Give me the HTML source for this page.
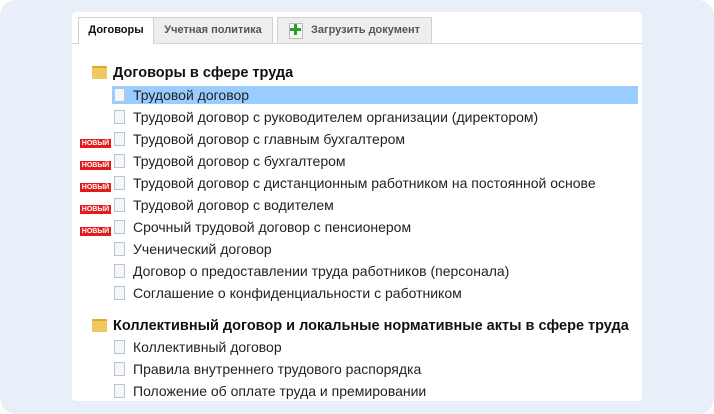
<!DOCTYPE html>
<html><head><meta charset="utf-8"><style>
body{margin:0;width:714px;height:414px;background:#fff;font-family:"Liberation Sans","DejaVu Sans",sans-serif;overflow:hidden}
.frame{position:absolute;left:0;top:0;width:714px;height:414px;background:#e9eff8;border-radius:16px}
.panel{position:absolute;left:72px;top:12px;width:570px;height:389px;background:#fff;border-radius:4px}
.tabline{position:absolute;left:72px;top:43px;width:570px;height:1px;background:#d8d8d8}
.tab{position:absolute;top:17px;height:26px;box-sizing:border-box;border:1px solid #d0d0d0;border-bottom:none;font-size:11px;font-weight:bold;line-height:25px;text-align:center;color:#555;background:#eee}
.row{position:absolute;left:133px;font-size:14px;color:#222;white-space:nowrap;height:18px;line-height:18px}
.h{position:absolute;left:113px;font-size:14.5px;font-weight:bold;color:#111;white-space:nowrap;line-height:18px}
.doc{position:absolute;left:114px;width:9px;height:12px;background:#f4f6fa;border:1px solid #b8c4d4}
.fold{position:absolute;left:92px;width:15px;height:11px;background:#f0c860;border-radius:1px;border-top:2px solid #e0a830}
.new{position:absolute;left:80px;width:31px;height:9px;background:#e21b1b;color:#fff;font-size:7px;font-weight:bold;line-height:9px;text-align:center}
.hl{position:absolute;left:112px;top:86px;width:526px;height:18px;background:#99ccff}
</style></head><body>
<div class="frame"></div>
<div class="panel"></div>
<div class="tabline"></div>
<div class="tab" style="left:78px;width:76px;background:#fff;color:#111;height:27px">Договоры</div>
<div class="tab" style="left:153px;width:120px">Учетная политика</div>
<div class="tab" style="left:277px;width:155px;text-align:left;padding-left:33px">Загрузить документ
<div style="position:absolute;left:11px;top:5px;width:12px;height:14px;background:#f4f6f8;border:1px solid #bbb"></div>
<div style="position:absolute;left:12px;top:10px;width:11px;height:3px;background:#2aa02a"></div>
<div style="position:absolute;left:16px;top:6px;width:3px;height:11px;background:#2aa02a"></div></div>
<div class="hl"></div>
<div class="fold" style="top:66px"></div><div class="h" style="top:64px">Договоры в сфере труда</div>
<div class="doc" style="top:88px"></div><div class="row" style="top:86px">Трудовой договор</div>
<div class="doc" style="top:110px"></div><div class="row" style="top:108px">Трудовой договор с руководителем организации (директором)</div>
<div class="doc" style="top:132px"></div><div class="row" style="top:130px">Трудовой договор с главным бухгалтером</div><div class="new" style="top:139px">НОВЫЙ</div>
<div class="doc" style="top:154px"></div><div class="row" style="top:152px">Трудовой договор с бухгалтером</div><div class="new" style="top:161px">НОВЫЙ</div>
<div class="doc" style="top:176px"></div><div class="row" style="top:174px">Трудовой договор с дистанционным работником на постоянной основе</div><div class="new" style="top:183px">НОВЫЙ</div>
<div class="doc" style="top:198px"></div><div class="row" style="top:196px">Трудовой договор с водителем</div><div class="new" style="top:205px">НОВЫЙ</div>
<div class="doc" style="top:220px"></div><div class="row" style="top:218px">Срочный трудовой договор с пенсионером</div><div class="new" style="top:227px">НОВЫЙ</div>
<div class="doc" style="top:242px"></div><div class="row" style="top:240px">Ученический договор</div>
<div class="doc" style="top:264px"></div><div class="row" style="top:262px">Договор о предоставлении труда работников (персонала)</div>
<div class="doc" style="top:286px"></div><div class="row" style="top:284px">Соглашение о конфиденциальности с работником</div>
<div class="fold" style="top:319px"></div><div class="h" style="top:317px">Коллективный договор и локальные нормативные акты в сфере труда</div>
<div class="doc" style="top:340px"></div><div class="row" style="top:338px">Коллективный договор</div>
<div class="doc" style="top:362px"></div><div class="row" style="top:360px">Правила внутреннего трудового распорядка</div>
<div class="doc" style="top:384px"></div><div class="row" style="top:382px">Положение об оплате труда и премировании</div>
</body></html>
